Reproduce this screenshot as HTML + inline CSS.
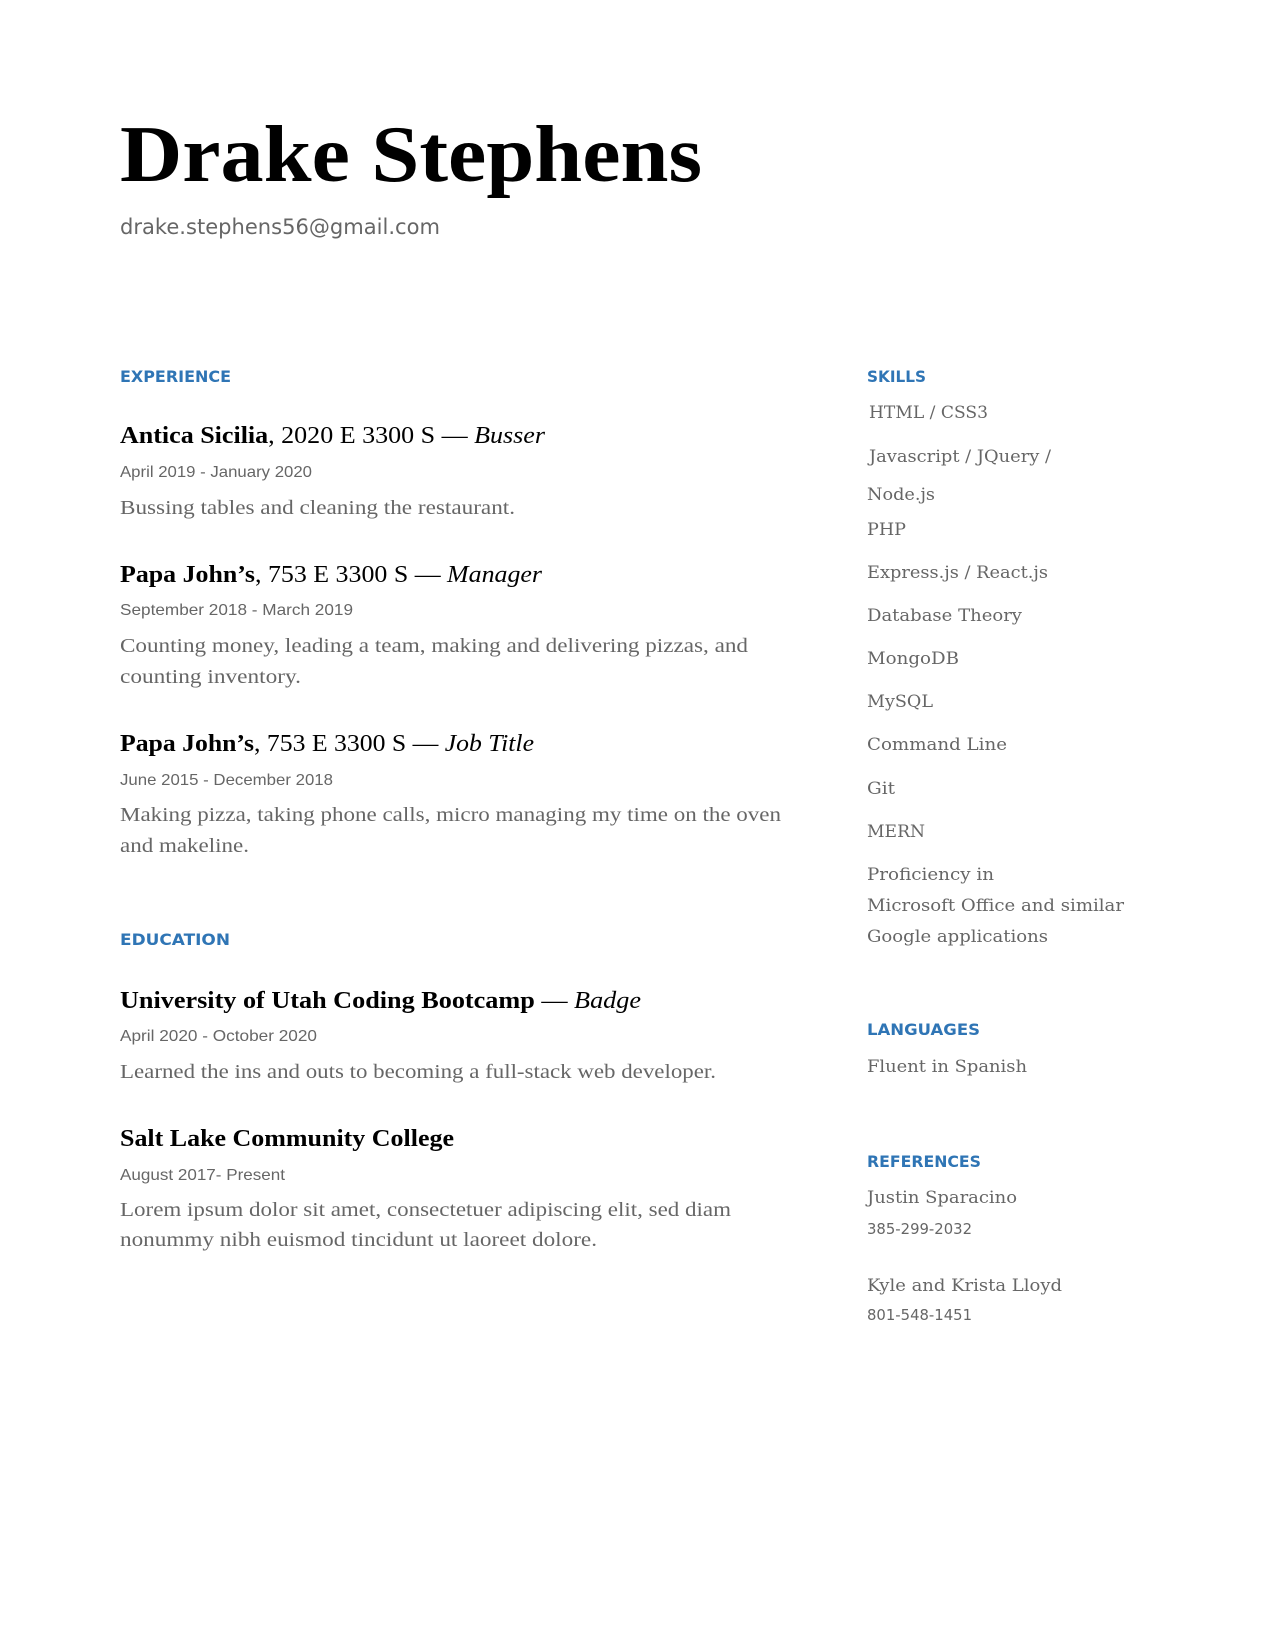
<!DOCTYPE html>
<html><head><meta charset="utf-8"><style>
html,body{margin:0;padding:0;background:#fff;}
svg{display:block;}
.n{font-family:"Liberation Serif",serif;font-weight:bold;fill:#000;}
.s{font-family:"DejaVu Sans","Liberation Sans",sans-serif;}
.sec{font-family:"DejaVu Sans","Liberation Sans",sans-serif;font-weight:bold;fill:#2f75b5;font-size:16px;}
.h{font-family:"Liberation Serif",serif;fill:#000;font-size:24px;}
.d{font-family:"Liberation Sans",sans-serif;fill:#666;font-size:16px;}
.p{font-family:"Liberation Serif",serif;fill:#666;font-size:20px;}
.r{font-family:"DejaVu Serif",serif;fill:#666;font-size:17px;}
.ph{font-family:"DejaVu Sans",sans-serif;fill:#666;font-size:15px;}
</style></head><body>
<svg width="1275" height="1650" viewBox="0 0 1275 1650" xmlns="http://www.w3.org/2000/svg">
<rect width="1275" height="1650" fill="#fff"/>
<text class="n" x="120" y="181" font-size="80" textLength="582" lengthAdjust="spacingAndGlyphs">Drake Stephens</text>
<text class="s" x="120" y="234" font-size="21" fill="#666" textLength="320" lengthAdjust="spacingAndGlyphs">drake.stephens56@gmail.com</text>

<text class="sec" x="120" y="382" textLength="111" lengthAdjust="spacingAndGlyphs">EXPERIENCE</text>
<text class="h" x="120" y="443" textLength="425" lengthAdjust="spacingAndGlyphs"><tspan font-weight="bold">Antica Sicilia</tspan>, 2020 E 3300 S — <tspan font-style="italic">Busser</tspan></text>
<text class="d" x="120" y="477" textLength="192" lengthAdjust="spacingAndGlyphs">April 2019 - January 2020</text>
<text class="p" x="120" y="514" textLength="395" lengthAdjust="spacingAndGlyphs">Bussing tables and cleaning the restaurant.</text>

<text class="h" x="120" y="582" textLength="422" lengthAdjust="spacingAndGlyphs"><tspan font-weight="bold">Papa John’s</tspan>, 753 E 3300 S — <tspan font-style="italic">Manager</tspan></text>
<text class="d" x="120" y="615" textLength="233" lengthAdjust="spacingAndGlyphs">September 2018 - March 2019</text>
<text class="p" x="120" y="652" textLength="628" lengthAdjust="spacingAndGlyphs">Counting money, leading a team,  making and delivering pizzas, and</text>
<text class="p" x="120" y="683" textLength="181" lengthAdjust="spacingAndGlyphs">counting inventory.</text>

<text class="h" x="120" y="751" textLength="414" lengthAdjust="spacingAndGlyphs"><tspan font-weight="bold">Papa John’s</tspan>, 753 E 3300 S — <tspan font-style="italic">Job Title</tspan></text>
<text class="d" x="120" y="785" textLength="213" lengthAdjust="spacingAndGlyphs">June 2015 - December 2018</text>
<text class="p" x="120" y="821" textLength="661" lengthAdjust="spacingAndGlyphs">Making pizza, taking phone calls,  micro managing my time on the oven</text>
<text class="p" x="120" y="852" textLength="129" lengthAdjust="spacingAndGlyphs">and makeline.</text>

<text class="sec" x="120" y="945" textLength="110" lengthAdjust="spacingAndGlyphs">EDUCATION</text>
<text class="h" x="120" y="1008" textLength="521" lengthAdjust="spacingAndGlyphs"><tspan font-weight="bold">University of Utah Coding Bootcamp</tspan> — <tspan font-style="italic">Badge</tspan></text>
<text class="d" x="120" y="1041" textLength="197" lengthAdjust="spacingAndGlyphs">April 2020 - October 2020</text>
<text class="p" x="120" y="1078" textLength="596" lengthAdjust="spacingAndGlyphs">Learned the ins and outs to becoming a full-stack web developer.</text>
<text class="h" x="120" y="1146" font-weight="bold" textLength="334" lengthAdjust="spacingAndGlyphs">Salt Lake Community College</text>
<text class="d" x="120" y="1180" textLength="165" lengthAdjust="spacingAndGlyphs">August 2017- Present</text>
<text class="p" x="120" y="1216" textLength="611" lengthAdjust="spacingAndGlyphs">Lorem ipsum dolor sit amet, consectetuer adipiscing elit, sed diam</text>
<text class="p" x="120" y="1246" textLength="477" lengthAdjust="spacingAndGlyphs">nonummy nibh euismod tincidunt ut laoreet dolore.</text>

<text class="sec" x="867" y="382" textLength="59" lengthAdjust="spacingAndGlyphs">SKILLS</text>
<text class="r" x="869" y="418" textLength="119" lengthAdjust="spacingAndGlyphs">HTML / CSS3</text>
<text class="r" x="869" y="462" textLength="182" lengthAdjust="spacingAndGlyphs">Javascript / JQuery /</text>
<text class="r" x="867" y="500" textLength="68" lengthAdjust="spacingAndGlyphs">Node.js</text>
<text class="r" x="867" y="535" textLength="39" lengthAdjust="spacingAndGlyphs">PHP</text>
<text class="r" x="867" y="578" textLength="181" lengthAdjust="spacingAndGlyphs">Express.js / React.js</text>
<text class="r" x="867" y="621" textLength="155" lengthAdjust="spacingAndGlyphs">Database Theory</text>
<text class="r" x="867" y="664" textLength="92" lengthAdjust="spacingAndGlyphs">MongoDB</text>
<text class="r" x="867" y="707" textLength="66" lengthAdjust="spacingAndGlyphs">MySQL</text>
<text class="r" x="867" y="750" textLength="140" lengthAdjust="spacingAndGlyphs">Command Line</text>
<text class="r" x="867" y="794" textLength="28" lengthAdjust="spacingAndGlyphs">Git</text>
<text class="r" x="867" y="837" textLength="58" lengthAdjust="spacingAndGlyphs">MERN</text>
<text class="r" x="867" y="880" textLength="127" lengthAdjust="spacingAndGlyphs">Proficiency in</text>
<text class="r" x="867" y="911" textLength="257" lengthAdjust="spacingAndGlyphs">Microsoft Office and similar</text>
<text class="r" x="867" y="942" textLength="181" lengthAdjust="spacingAndGlyphs">Google applications</text>

<text class="sec" x="867" y="1035" textLength="113" lengthAdjust="spacingAndGlyphs">LANGUAGES</text>
<text class="r" x="867" y="1072" textLength="160" lengthAdjust="spacingAndGlyphs">Fluent in Spanish</text>
<text class="sec" x="867" y="1167" textLength="114" lengthAdjust="spacingAndGlyphs">REFERENCES</text>
<text class="r" x="867" y="1203" textLength="150" lengthAdjust="spacingAndGlyphs">Justin Sparacino</text>
<text class="ph" x="867" y="1234" textLength="105" lengthAdjust="spacingAndGlyphs">385-299-2032</text>
<text class="r" x="867" y="1291" textLength="195" lengthAdjust="spacingAndGlyphs">Kyle and Krista Lloyd</text>
<text class="ph" x="867" y="1320" textLength="105" lengthAdjust="spacingAndGlyphs">801-548-1451</text>
</svg>
</body></html>
